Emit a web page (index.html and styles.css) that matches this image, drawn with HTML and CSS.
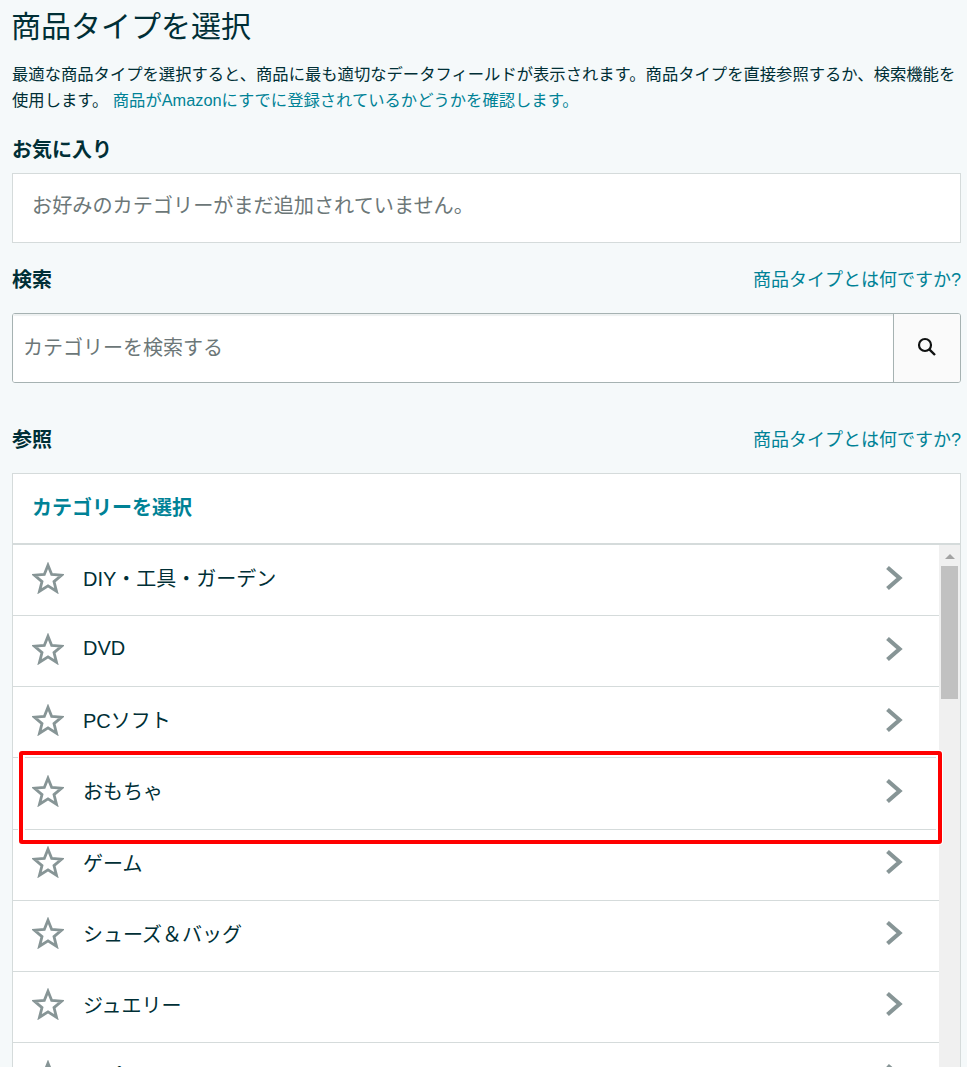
FILE: index.html
```html
<!DOCTYPE html>
<html lang="ja">
<head>
<meta charset="utf-8">
<title>商品タイプを選択</title>
<link rel="stylesheet" href="styles.css">
</head>
<body>
<svg class="defs" width="0" height="0" aria-hidden="true">
  <symbol id="star" viewBox="0 0 32 32"><path d="M16 3.200l3.700 9.300 10 .7-7.700 6.400 2.500 9.700L16 23.900l-8.500 5.400 2.500-9.700-7.700-6.400 10-.7z" fill="none" stroke="#879596" stroke-width="2.800" stroke-linejoin="miter"/></symbol>
  <symbol id="chev" viewBox="0 0 18 26"><path d="M2.500 2.500L14.500 13 2.500 23.500" fill="none" stroke="#879596" stroke-width="4.200"/></symbol>
</svg>
<main class="page">
  <h1 class="title">商品タイプを選択</h1>
  <p class="desc">最適な商品タイプを選択すると、商品に最も適切なデータフィールドが表示されます。商品タイプを直接参照するか、検索機能を使用します。 <a class="link" href="#">商品がAmazonにすでに登録されているかどうかを確認します。</a></p>

  <h2 class="label fav-label">お気に入り</h2>
  <div class="fav-box">お好みのカテゴリーがまだ追加されていません。</div>

  <div class="head-row search-head">
    <h2 class="label">検索</h2>
    <a class="link help" href="#">商品タイプとは何ですか?</a>
  </div>
  <div class="search">
    <input class="search-input" type="text" placeholder="カテゴリーを検索する">
    <button class="search-btn" type="button" aria-label="検索">
      <svg width="20" height="20" viewBox="0 0 20 20"><circle cx="8" cy="8" r="6" fill="none" stroke="#0f1111" stroke-width="2.200"/><path d="M12.300 12.300L18 18" stroke="#0f1111" stroke-width="2.400"/></svg>
    </button>
  </div>

  <div class="head-row browse-head">
    <h2 class="label">参照</h2>
    <a class="link help" href="#">商品タイプとは何ですか?</a>
  </div>
  <section class="card">
    <div class="card-head">カテゴリーを選択</div>
    <div class="card-body">
      <ul class="list">
        <li class="row"><svg class="star"><use href="#star"/></svg><span class="name">DIY・工具・ガーデン</span><svg class="chev"><use href="#chev"/></svg></li>
        <li class="row"><svg class="star"><use href="#star"/></svg><span class="name">DVD</span><svg class="chev"><use href="#chev"/></svg></li>
        <li class="row"><svg class="star"><use href="#star"/></svg><span class="name">PCソフト</span><svg class="chev"><use href="#chev"/></svg></li>
        <li class="row"><svg class="star"><use href="#star"/></svg><span class="name">おもちゃ</span><svg class="chev"><use href="#chev"/></svg></li>
        <li class="row"><svg class="star"><use href="#star"/></svg><span class="name">ゲーム</span><svg class="chev"><use href="#chev"/></svg></li>
        <li class="row"><svg class="star"><use href="#star"/></svg><span class="name">シューズ＆バッグ</span><svg class="chev"><use href="#chev"/></svg></li>
        <li class="row"><svg class="star"><use href="#star"/></svg><span class="name">ジュエリー</span><svg class="chev"><use href="#chev"/></svg></li>
        <li class="row"><svg class="star"><use href="#star"/></svg><span class="name">スポーツ</span><svg class="chev"><use href="#chev"/></svg></li>
      </ul>
      <div class="scrollbar">
        <span class="arrow-up"></span>
        <span class="thumb"></span>
      </div>
    </div>
  </section>
</main>
<div class="highlight"></div>
</body>
</html>
```

FILE: styles.css
```css
* { box-sizing: border-box; }
html, body { margin: 0; height: 1067px; overflow: hidden; }
body {
  position: relative;
  background: #f5f9fa;
  color: #002f36;
  font-family: "Liberation Sans", "Noto Sans CJK JP", sans-serif;
}
.defs { position: absolute; }
.page { padding: 0 6px 0 12px; }
.title {
  margin: 0 0 0 -1px;
  height: 54px;
  font-size: 30px;
  font-weight: 400;
  line-height: 54px;
}
.desc {
  margin: 8px 0 0;
  font-size: 16.320px;
  line-height: 25.500px;
  width: 949px;
}
.link { color: #008296; text-decoration: none; }
.label { margin: 0; font-size: 20px; font-weight: 700; line-height: 28px; }
.fav-label { margin-top: 23px; }
.fav-box {
  margin-top: 9px;
  height: 70px;
  padding: 0 0 8px 19px;
  display: flex;
  align-items: center;
  background: #fff;
  border: 1px solid #d5dbdb;
  color: #6c7778;
  font-size: 20.150px;
}
.head-row { display: flex; justify-content: space-between; align-items: center; height: 28px; }
.head-row .label { margin-top: 2px; }
.search-head { margin-top: 22px; }
.help { font-size: 18px; margin-top: -2px; }
.search {
  margin-top: 20px;
  display: flex;
  height: 70px;
  background: #fff;
  border: 1px solid #a6b2b2;
  border-radius: 3px;
  overflow: hidden;
}
.search-input {
  flex: 1;
  min-width: 0;
  border: 0;
  outline: 0;
  padding: 0 10px;
  background: #fff;
  box-shadow: inset 0 2px 1px #eef1f1;
  font: 20px "Liberation Sans", "Noto Sans CJK JP", sans-serif;
  color: #002f36;
}
.search-input::placeholder { color: #6c7778; opacity: 1; }
.search-btn {
  width: 67px;
  padding: 0 0 2px;
  display: flex;
  align-items: center;
  justify-content: center;
  background: #fafafa;
  border: 0;
  border-left: 1px solid #a6b2b2;
}
.browse-head { margin-top: 42px; }
.card {
  margin-top: 20px;
  background: #fff;
  border: 1px solid #d5dbdb;
  border-bottom: 0;
}
.card-head {
  height: 71px;
  padding: 0 0 4px 19px;
  display: flex;
  align-items: center;
  color: #008296;
  font-size: 20px;
  font-weight: 700;
  border-bottom: 2px solid #d5dbdb;
}
.card-body { display: flex; align-items: flex-start; }
.list { flex: 1; min-width: 0; margin: 0; padding: 0; list-style: none; }
.row {
  height: 71.150px;
  padding: 0 36px 5px 19px;
  display: flex;
  align-items: center;
  border-bottom: 1px solid #d5dbdb;
}
.star { width: 32px; height: 32px; flex: none; }
.name { flex: 1; margin-left: 19px; font-size: 20px; }
.chev { width: 18px; height: 26px; flex: none; }
.scrollbar {
  width: 21px;
  height: 540px;
  flex: none;
  background: #f0f0f0;
  display: flex;
  flex-direction: column;
  align-items: center;
}
.arrow-up {
  margin-top: 9px;
  border-left: 5px solid transparent;
  border-right: 5px solid transparent;
  border-bottom: 5px solid #a3a3a3;
}
.thumb { margin-top: 7px; width: 17px; height: 133px; background: #c1c1c1; }
.highlight {
  position: absolute;
  left: 19px;
  top: 751px;
  width: 923px;
  height: 93px;
  border: 4px solid #f00;
  border-radius: 3px;
  box-shadow: 0 0 0 1px #fff, inset 0 0 0 2px #fff;
}
```
